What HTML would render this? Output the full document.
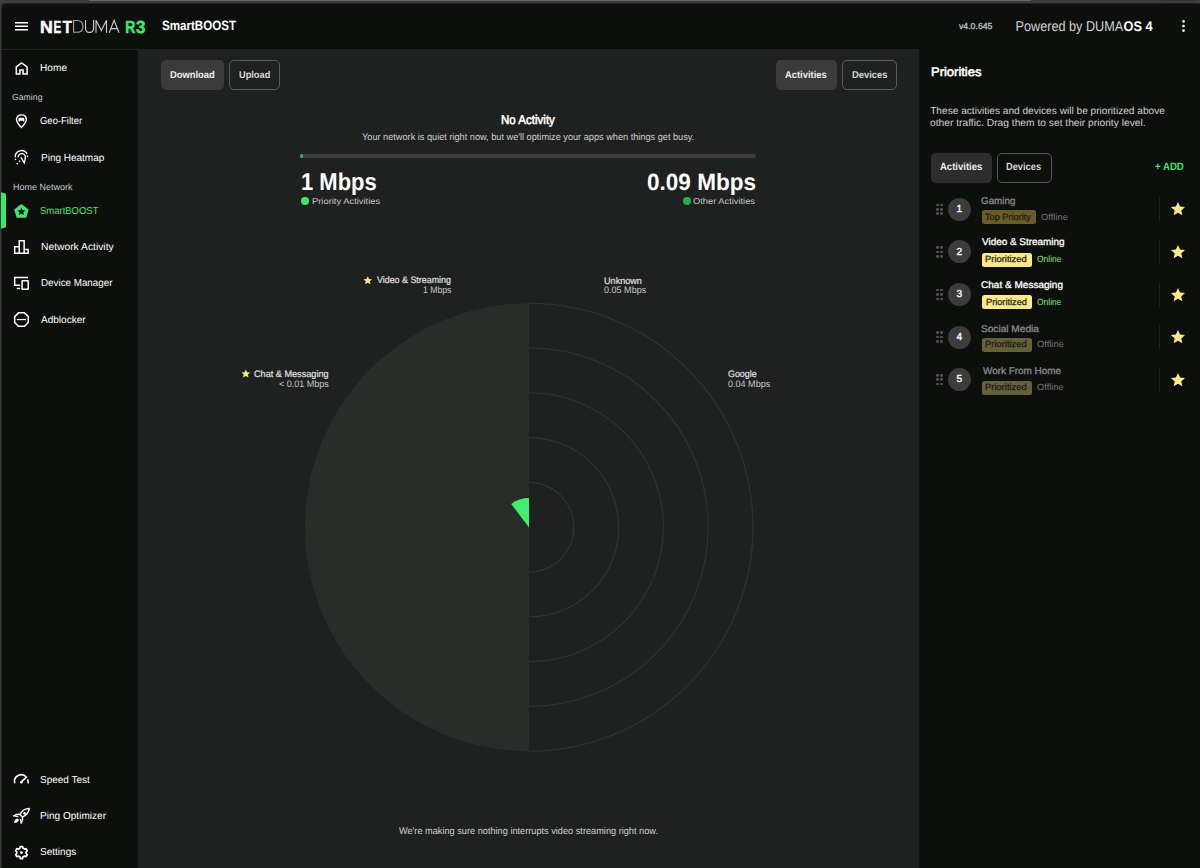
<!DOCTYPE html>
<html><head><meta charset="utf-8">
<style>
*{box-sizing:border-box;margin:0;padding:0}
html,body{width:1200px;height:868px;overflow:hidden;background:#3c3c3c}
body{position:relative;font-family:"Liberation Sans",sans-serif;text-rendering:geometricPrecision}
.t{position:absolute;white-space:nowrap;transform-origin:0 50%}
#topline{position:absolute;left:89px;top:0;width:942px;height:1px;background:#666}
#app{position:absolute;left:1px;top:3px;width:1199px;height:866.5px;background:#0d0f0d;border-radius:5px 2px 0 5px;box-shadow:inset 1px 1px 0 #222}
#hdrline{position:absolute;left:2px;top:49px;width:136px;height:1px;background:#222322}
#main{position:absolute;left:138px;top:49px;width:781px;height:819px;background:#1f2120}
.btn{position:absolute;height:30px;border-radius:5px}
.btn.on{background:#3a3b3a}
.btn.off{border:1px solid #5c5c5c}
.ico{position:absolute}
#bar{position:absolute;left:300px;top:154px;width:456px;height:4px;border-radius:2px;background:#3c3d3c}
#barg{position:absolute;left:300px;top:154px;width:3px;height:4px;border-radius:2px;background:#2fb84f}
.gdot{position:absolute;width:7.5px;height:7.5px;border-radius:50%}
#chart{position:absolute;left:0;top:0}
#rp{position:absolute;left:919px;top:49px;width:281px;height:819px;background:#0d0f0d}
.tab{position:absolute;top:153px;height:30px;border-radius:5px}
.dot{position:absolute;width:2.8px;height:2.8px;border-radius:50%;background:#555}
.num{position:absolute;width:23px;height:23px;border-radius:50%;background:#3b3c3b}
.badge{position:absolute;height:14px;border-radius:2.5px}
.sep{position:absolute;left:1159px;width:1px;height:24px;background:#222322}
.star{position:absolute}
</style></head><body>
<div id="topline"></div><div style="position:absolute;left:1161px;top:0;width:34px;height:1px;background:#303030"></div>
<div id="app"></div>
<div id="hdrline"></div>
<div id="main"></div>
<div id="rp"></div>

<!-- header -->
<svg class="ico" style="left:14px;top:20px" width="16" height="13" viewBox="0 0 16 13">
 <rect x="1" y="2" width="13" height="1.5" fill="#fff"/>
 <rect x="1" y="5.5" width="13" height="1.5" fill="#fff"/>
 <rect x="1" y="9" width="13" height="1.5" fill="#fff"/>
</svg>
<svg class="ico" style="left:36px;top:14px" width="120" height="24" viewBox="0 0 120 24">
 <g font-family="Liberation Sans" font-weight="700" font-size="17.6" fill="#fff" stroke="#fff" stroke-width="0.5">
  <text x="4.0" y="18.7" textLength="12.85" lengthAdjust="spacingAndGlyphs">N</text>
  <text x="17.44" y="18.7" textLength="7.74" lengthAdjust="spacingAndGlyphs">E</text>
  <text x="26.85" y="18.7" textLength="9.07" lengthAdjust="spacingAndGlyphs">T</text>
 </g>
 <g fill="none" stroke="#d0d0d0" stroke-width="1.1">
  <path d="M37.6 6.55 V18.2 H41 C45 18.2 46.9 15.6 46.9 12.4 C46.9 9.1 45 6.55 41 6.55 Z" stroke="#a8a8a8"/>
  <path d="M49.5 6 V14.2 C49.5 17 51.2 18.4 53.6 18.4 C56 18.4 57.6 17 57.6 14.2 V6"/>
  <path d="M60 18.75 V6.3 L65.3 16.5 L70.5 6.3 V18.75"/>
  <path d="M73.2 18.75 L78.1 6.2 L83 18.75 M74.9 14.6 H81.3"/>
 </g>
 <g font-family="Liberation Sans" font-weight="700" font-size="17.6" fill="#3ee66c" stroke="#3ee66c" stroke-width="0.5">
  <text x="89.28" y="18.7" textLength="10.03" lengthAdjust="spacingAndGlyphs">R</text>
  <text x="99.9" y="18.7" textLength="9.45" lengthAdjust="spacingAndGlyphs">3</text>
 </g>
</svg>
<svg class="ico" style="left:1010px;top:14px" width="150" height="24" viewBox="0 0 150 24">
 <text x="5.6" y="16.8" font-family="Liberation Sans" font-weight="400" font-size="14.2" fill="#d2d2d2" textLength="107.6" lengthAdjust="spacingAndGlyphs">Powered by DUMA</text>
 <text x="113.6" y="16.8" font-family="Liberation Sans" font-weight="700" font-size="14" fill="#fff" textLength="29" lengthAdjust="spacingAndGlyphs">OS 4</text>
</svg>
<svg class="ico" style="left:1180px;top:19px" width="8" height="15" viewBox="0 0 8 15">
 <circle cx="3.5" cy="2.4" r="1.3" fill="#fff"/><circle cx="3.5" cy="7" r="1.3" fill="#fff"/><circle cx="3.5" cy="11.6" r="1.3" fill="#fff"/>
</svg>

<!-- sidebar icons (22x22 boxes) -->
<svg class="ico" style="left:10px;top:58px" width="22" height="22" viewBox="0 0 22 22" fill="none" stroke="#fff" stroke-width="1.5" stroke-linejoin="miter">
 <path d="M6.3 16 V8.8 L11.5 4.9 L17.1 8.8 V16 H13.1 V11.9 H9.9 V16 Z"/>
</svg>
<svg class="ico" style="left:10px;top:110px" width="22" height="22" viewBox="0 0 22 22">
 <path d="M11.4 17.6 C8.6 14.8 6.5 12.4 6.5 9.6 C6.5 6.6 8.7 4.9 11.4 4.9 C14.1 4.9 16.3 6.6 16.3 9.6 C16.3 12.4 14.2 14.8 11.4 17.6 Z" fill="none" stroke="#fff" stroke-width="1.4"/>
 <path d="M9.4 7.8 H13.4 C14 7.8 14.3 8.2 14.3 8.8 V11.5 H13.1 L12.7 10.7 H10.1 L9.7 11.5 H8.5 V8.8 C8.5 8.2 8.8 7.8 9.4 7.8 Z" fill="#fff"/>
</svg>
<svg class="ico" style="left:10px;top:146px" width="22" height="22" viewBox="0 0 22 22" fill="none" stroke="#fff" stroke-width="1.35">
 <path d="M5.2 11.2 A6.3 6.3 0 0 1 17.1 8"/>
 <path d="M8.2 11.2 A3.55 3.55 0 0 1 15.3 11.2 C15.3 13 14.8 15 14.2 16.9 L10.9 11.3"/>
 <rect x="4.8" y="12.7" width="1.4" height="1.4" fill="#fff" stroke="none"/>
 <rect x="8.9" y="14.5" width="1.4" height="1.4" fill="#fff" stroke="none"/>
 <rect x="6.5" y="16.9" width="1.4" height="1.4" fill="#fff" stroke="none"/>
 <rect x="16.8" y="9.6" width="1.4" height="1.4" fill="#fff" stroke="none"/>
</svg>
<svg class="ico" style="left:1px;top:192px" width="6" height="37" viewBox="0 0 6 37"><path d="M0 0.3 L5 1.8 V35.2 L0 36.7 Z" fill="#3ee66c"/></svg>
<svg class="ico" style="left:10px;top:200px" width="22" height="22" viewBox="0 0 22 22">
 <path fill-rule="evenodd" fill="#3ee66c" d="M11.4 4 L18.6 9.4 L16.2 17.8 H6.6 L4.2 9.4 Z M11.4 7.6 L12.6 10.2 L15.5 10.4 L13.3 12.3 L14 15 L11.4 13.6 L8.8 15 L9.5 12.3 L7.3 10.4 L10.2 10.2 Z"/>
</svg>
<svg class="ico" style="left:10px;top:236px" width="22" height="22" viewBox="0 0 22 22" fill="none" stroke="#fff" stroke-width="1.5">
 <path d="M4.7 17.35 V10.75 H9.25 V4.7 H14.15 V13.55 H18.1 V17.35 Z M9.25 10.75 V17.35 M14.15 13.55 V17.35"/>
</svg>
<svg class="ico" style="left:10px;top:272px" width="22" height="22" viewBox="0 0 22 22" fill="none" stroke="#fff" stroke-width="1.5">
 <path d="M18 5.6 H4.7 V13.25 H10.1"/>
 <path d="M6.8 16.5 H10.1"/>
 <rect x="12.05" y="8.75" width="6.2" height="8.5" rx="0.6"/>
</svg>
<svg class="ico" style="left:10px;top:308px" width="22" height="22" viewBox="0 0 22 22" fill="none" stroke="#fff" stroke-width="1.5">
 <path d="M8.5 4.85 H14.5 L18.25 8.6 V14.55 L14.5 18.3 H8.5 L4.7 14.55 V8.6 Z"/>
 <path d="M6.8 11.55 H16" stroke-width="1.2"/>
</svg>
<svg class="ico" style="left:10px;top:768px" width="22" height="22" viewBox="0 0 22 22" fill="none" stroke="#fff" stroke-width="1.6">
 <path d="M4.8 15.3 A6.7 6.7 0 0 1 16.4 9.2 L11.6 13.6"/>
 <path d="M17.5 11.4 A6.7 6.7 0 0 1 18.2 15.3"/>
 <circle cx="11.3" cy="14.2" r="1.3" fill="#fff" stroke="none"/>
</svg>
<svg class="ico" style="left:10px;top:804px" width="22" height="22" viewBox="0 0 22 22" fill="none" stroke="#fff" stroke-width="1.4" stroke-linejoin="round">
 <path d="M19.3 4.4 C15.2 4.6 11.8 6.8 9.9 10.6 L12.4 13.1 C16.2 11.2 18.9 8.2 19.3 4.4 Z"/>
 <path d="M9.9 10.6 C8.2 10 6 10.4 3.8 11.8 C5.4 12 6.8 12.3 8.3 12.6 M12.4 13.1 C13 14.8 12.6 17 11.2 19.2 C11 17.6 10.7 16.2 10.4 14.8"/>
 <circle cx="14.5" cy="9.2" r="1.2" fill="#fff" stroke="none"/>
 <path d="M4 18.9 C4.2 16.5 5.4 14.9 7.7 14.6 L8.9 15.8 C8.6 18 6.6 19 4 18.9 Z" fill="#fff" stroke="none"/>
</svg>
<svg class="ico" style="left:10px;top:840.5px" width="22" height="22" viewBox="0 0 22 22">
 <path fill="none" stroke="#fff" stroke-width="1.7" stroke-linejoin="round" d="M10.3 5.6 H12.6 L13 7.3 L14.5 8.1 L16.1 7.6 L17.3 9.6 L16.1 10.8 V12.4 L17.3 13.6 L16.1 15.6 L14.5 15.1 L13 15.9 L12.6 17.6 H10.3 L9.9 15.9 L8.4 15.1 L6.8 15.6 L5.6 13.6 L6.8 12.4 V10.8 L5.6 9.6 L6.8 7.6 L8.4 8.1 L9.9 7.3 Z"/>
 <circle cx="11.45" cy="11.6" r="1.4" fill="#fff"/>
</svg>

<!-- main -->
<div class="btn on" style="left:161px;top:60px;width:63px"></div>
<div class="btn off" style="left:229px;top:60px;width:51px"></div>
<div class="btn on" style="left:776px;top:60px;width:61px"></div>
<div class="btn off" style="left:842px;top:60px;width:55px"></div>
<div id="bar"></div><div id="barg"></div>
<div class="gdot" style="left:301.25px;top:197.3px;background:#3ee66c"></div>
<div class="gdot" style="left:683px;top:197.3px;background:#2ea84c"></div>

<svg id="chart" width="1200" height="868" style="position:absolute;left:0;top:0">
 <path d="M529 303.20 A224.00 224.00 0 0 0 529 751.20 Z" fill="#2a2c2a"/>
 <g fill="none" stroke="#323432" stroke-width="1.1">
  <path d="M529 482.40 A44.80 44.80 0 0 1 529 572.00"/>
  <path d="M529 437.60 A89.60 89.60 0 0 1 529 616.80"/>
  <path d="M529 392.80 A134.40 134.40 0 0 1 529 661.60"/>
  <path d="M529 348.00 A179.20 179.20 0 0 1 529 706.40"/>
  <path d="M529 303.20 A224.00 224.00 0 0 1 529 751.20"/>
 </g>
 <path d="M529 527.6 L529 498 A29.6 29.6 0 0 0 511.2 503.9 Z" fill="#41ee6e"/>
 <path d="M367.8 276.3 l1.3 2.7 3 .3-2.2 2 .6 2.9-2.7-1.5-2.7 1.5.6-2.9-2.2-2 3-.3z" fill="#f3e58a"/>
 <path d="M245.8 369.5 l1.3 2.7 3 .3-2.2 2 .6 2.9-2.7-1.5-2.7 1.5.6-2.9-2.2-2 3-.3z" fill="#f3e58a"/>
</svg>

<!-- right panel -->
<div class="tab" style="left:931px;width:61px;background:#2c2d2c"></div>
<div class="tab" style="left:997px;width:55px;border:1px solid #585858"></div>
<div class="dot" style="left:935.8px;top:203.5px"></div>
<div class="dot" style="left:940.4px;top:203.5px"></div>
<div class="dot" style="left:935.8px;top:207.9px"></div>
<div class="dot" style="left:940.4px;top:207.9px"></div>
<div class="dot" style="left:935.8px;top:212.3px"></div>
<div class="dot" style="left:940.4px;top:212.3px"></div>
<div class="num" style="left:947.8px;top:197.8px"></div>
<div class="badge" style="left:982px;top:210.2px;width:54px;background:#6b5b2b"></div>
<div class="sep" style="top:197.3px"></div>
<svg class="star" style="left:1170px;top:201.3px" width="16" height="16" viewBox="0 0 24 24"><path d="M12 1.5l3.1 6.9 7.4.7-5.6 5 1.7 7.4L12 17.6l-6.6 3.9 1.7-7.4-5.6-5 7.4-.7z" fill="#fbe98c"/></svg>
<div class="dot" style="left:935.8px;top:246.1px"></div>
<div class="dot" style="left:940.4px;top:246.1px"></div>
<div class="dot" style="left:935.8px;top:250.5px"></div>
<div class="dot" style="left:940.4px;top:250.5px"></div>
<div class="dot" style="left:935.8px;top:254.9px"></div>
<div class="dot" style="left:940.4px;top:254.9px"></div>
<div class="num" style="left:947.8px;top:240.4px"></div>
<div class="badge" style="left:982px;top:252.8px;width:50px;background:#fbe98c"></div>
<div class="sep" style="top:239.9px"></div>
<svg class="star" style="left:1170px;top:243.9px" width="16" height="16" viewBox="0 0 24 24"><path d="M12 1.5l3.1 6.9 7.4.7-5.6 5 1.7 7.4L12 17.6l-6.6 3.9 1.7-7.4-5.6-5 7.4-.7z" fill="#fbe98c"/></svg>
<div class="dot" style="left:935.8px;top:288.7px"></div>
<div class="dot" style="left:940.4px;top:288.7px"></div>
<div class="dot" style="left:935.8px;top:293.1px"></div>
<div class="dot" style="left:940.4px;top:293.1px"></div>
<div class="dot" style="left:935.8px;top:297.5px"></div>
<div class="dot" style="left:940.4px;top:297.5px"></div>
<div class="num" style="left:947.8px;top:283.0px"></div>
<div class="badge" style="left:982px;top:295.4px;width:50px;background:#fbe98c"></div>
<div class="sep" style="top:282.5px"></div>
<svg class="star" style="left:1170px;top:286.5px" width="16" height="16" viewBox="0 0 24 24"><path d="M12 1.5l3.1 6.9 7.4.7-5.6 5 1.7 7.4L12 17.6l-6.6 3.9 1.7-7.4-5.6-5 7.4-.7z" fill="#fbe98c"/></svg>
<div class="dot" style="left:935.8px;top:331.2px"></div>
<div class="dot" style="left:940.4px;top:331.2px"></div>
<div class="dot" style="left:935.8px;top:335.6px"></div>
<div class="dot" style="left:940.4px;top:335.6px"></div>
<div class="dot" style="left:935.8px;top:340.0px"></div>
<div class="dot" style="left:940.4px;top:340.0px"></div>
<div class="num" style="left:947.8px;top:325.5px"></div>
<div class="badge" style="left:982px;top:337.9px;width:50px;background:#65603c"></div>
<div class="sep" style="top:325.0px"></div>
<svg class="star" style="left:1170px;top:329.0px" width="16" height="16" viewBox="0 0 24 24"><path d="M12 1.5l3.1 6.9 7.4.7-5.6 5 1.7 7.4L12 17.6l-6.6 3.9 1.7-7.4-5.6-5 7.4-.7z" fill="#fbe98c"/></svg>
<div class="dot" style="left:935.8px;top:373.8px"></div>
<div class="dot" style="left:940.4px;top:373.8px"></div>
<div class="dot" style="left:935.8px;top:378.2px"></div>
<div class="dot" style="left:940.4px;top:378.2px"></div>
<div class="dot" style="left:935.8px;top:382.6px"></div>
<div class="dot" style="left:940.4px;top:382.6px"></div>
<div class="num" style="left:947.8px;top:368.1px"></div>
<div class="badge" style="left:982px;top:380.5px;width:50px;background:#65603c"></div>
<div class="sep" style="top:367.6px"></div>
<svg class="star" style="left:1170px;top:371.6px" width="16" height="16" viewBox="0 0 24 24"><path d="M12 1.5l3.1 6.9 7.4.7-5.6 5 1.7 7.4L12 17.6l-6.6 3.9 1.7-7.4-5.6-5 7.4-.7z" fill="#fbe98c"/></svg>

<div class="t" id="hdr_sb" style="left:161.93px;top:19.44px;font-size:13.48px;line-height:13.48px;font-weight:700;color:#ffffff;transform:scaleX(0.8611);">SmartBOOST</div>
<div class="t" id="hdr_ver" style="left:958.97px;top:21.61px;font-size:8.70px;line-height:8.70px;font-weight:400;-webkit-text-stroke:0.3px #b8c0c8;color:#b8c0c8;transform:scaleX(1.0025);">v4.0.645</div>
<div class="t" id="sb_home" style="left:40.00px;top:64.38px;font-size:10.14px;line-height:10.14px;font-weight:400;color:#ffffff;transform:scaleX(1.0000);">Home</div>
<div class="t" id="sb_gaming" style="left:12.00px;top:93.11px;font-size:8.70px;line-height:8.70px;font-weight:400;color:#c8c8c8;transform:scaleX(1.0021);">Gaming</div>
<div class="t" id="sb_geo" style="left:40.00px;top:117.38px;font-size:10.14px;line-height:10.14px;font-weight:400;color:#ffffff;transform:scaleX(0.9348);">Geo-Filter</div>
<div class="t" id="sb_ping" style="left:41.20px;top:153.78px;font-size:10.14px;line-height:10.14px;font-weight:400;color:#ffffff;transform:scaleX(0.9865);">Ping Heatmap</div>
<div class="t" id="sb_homenet" style="left:12.98px;top:183.16px;font-size:8.99px;line-height:8.99px;font-weight:400;color:#c8c8c8;transform:scaleX(1.0003);">Home Network</div>
<div class="t" id="sb_smart" style="left:40.00px;top:207.28px;font-size:10.14px;line-height:10.14px;font-weight:400;color:#3ee66c;transform:scaleX(0.9365);">SmartBOOST</div>
<div class="t" id="sb_netact" style="left:40.99px;top:243.18px;font-size:10.14px;line-height:10.14px;font-weight:400;color:#ffffff;transform:scaleX(1.0169);">Network Activity</div>
<div class="t" id="sb_devman" style="left:41.02px;top:279.28px;font-size:10.14px;line-height:10.14px;font-weight:400;color:#ffffff;transform:scaleX(0.9690);">Device Manager</div>
<div class="t" id="sb_adblock" style="left:40.96px;top:315.78px;font-size:10.14px;line-height:10.14px;font-weight:400;color:#ffffff;transform:scaleX(0.9901);">Adblocker</div>
<div class="t" id="sb_speed" style="left:40.40px;top:776.28px;font-size:10.14px;line-height:10.14px;font-weight:400;color:#ffffff;transform:scaleX(0.9865);">Speed Test</div>
<div class="t" id="sb_pingopt" style="left:40.39px;top:812.48px;font-size:10.14px;line-height:10.14px;font-weight:400;color:#ffffff;transform:scaleX(0.9942);">Ping Optimizer</div>
<div class="t" id="sb_settings" style="left:40.39px;top:848.28px;font-size:10.14px;line-height:10.14px;font-weight:400;color:#ffffff;transform:scaleX(0.9922);">Settings</div>
<div class="t" id="btn_dl" style="left:169.99px;top:71.30px;font-size:10.00px;line-height:10.00px;font-weight:700;color:#f0f0f0;transform:scaleX(0.9369);">Download</div>
<div class="t" id="btn_ul" style="left:238.98px;top:71.30px;font-size:10.00px;line-height:10.00px;font-weight:700;color:#d8d8d8;transform:scaleX(0.9226);">Upload</div>
<div class="t" id="btn_act" style="left:784.88px;top:71.30px;font-size:10.00px;line-height:10.00px;font-weight:700;color:#f0f0f0;transform:scaleX(0.9381);">Activities</div>
<div class="t" id="btn_dev" style="left:852.16px;top:71.30px;font-size:10.00px;line-height:10.00px;font-weight:700;color:#d8d8d8;transform:scaleX(0.9390);">Devices</div>
<div class="t" id="noact" style="left:501.13px;top:113.98px;font-size:12.61px;line-height:12.61px;font-weight:400;-webkit-text-stroke:0.55px #ffffff;color:#ffffff;transform:scaleX(0.9152);">No Activity</div>
<div class="t" id="noact_sub" style="left:362.19px;top:132.95px;font-size:9.71px;line-height:9.71px;font-weight:400;color:#d0d0d0;transform:scaleX(0.9456);">Your network is quiet right now, but we'll optimize your apps when things get busy.</div>
<div class="t" id="spd1" style="left:301.03px;top:170.93px;font-size:24.20px;line-height:24.20px;font-weight:700;color:#ffffff;transform:scaleX(0.9088);">1 Mbps</div>
<div class="t" id="spd1_lbl" style="left:311.95px;top:197.48px;font-size:8.55px;line-height:8.55px;font-weight:400;color:#c8c8c8;transform:scaleX(1.0955);">Priority Activities</div>
<div class="t" id="spd2" style="left:647.01px;top:171.04px;font-size:23.48px;line-height:23.48px;font-weight:700;color:#ffffff;transform:scaleX(0.9603);">0.09 Mbps</div>
<div class="t" id="spd2_lbl" style="left:693.00px;top:197.48px;font-size:8.55px;line-height:8.55px;font-weight:400;color:#c8c8c8;transform:scaleX(1.0877);">Other Activities</div>
<div class="t" id="lbl_vs" style="left:377.37px;top:274.89px;font-size:9.42px;line-height:9.42px;font-weight:400;-webkit-text-stroke:0.2px #e0e0e0;color:#e0e0e0;transform:scaleX(0.9445);">Video &amp; Streaming</div>
<div class="t" id="lbl_vs2" style="left:423.19px;top:285.19px;font-size:9.42px;line-height:9.42px;font-weight:400;color:#c8c8c8;transform:scaleX(0.9211);">1 Mbps</div>
<div class="t" id="lbl_unk" style="left:604.40px;top:275.59px;font-size:9.42px;line-height:9.42px;font-weight:400;-webkit-text-stroke:0.2px #e0e0e0;color:#e0e0e0;transform:scaleX(0.9670);">Unknown</div>
<div class="t" id="lbl_unk2" style="left:604.38px;top:285.39px;font-size:9.42px;line-height:9.42px;font-weight:400;color:#c8c8c8;transform:scaleX(0.9609);">0.05 Mbps</div>
<div class="t" id="lbl_chat" style="left:254.20px;top:368.59px;font-size:9.42px;line-height:9.42px;font-weight:400;-webkit-text-stroke:0.2px #e0e0e0;color:#e0e0e0;transform:scaleX(0.9702);">Chat &amp; Messaging</div>
<div class="t" id="lbl_chat2" style="left:279.39px;top:378.59px;font-size:9.42px;line-height:9.42px;font-weight:400;color:#c8c8c8;transform:scaleX(0.9587);">&lt; 0.01 Mbps</div>
<div class="t" id="lbl_goog" style="left:727.52px;top:368.99px;font-size:9.42px;line-height:9.42px;font-weight:400;-webkit-text-stroke:0.2px #e0e0e0;color:#e0e0e0;transform:scaleX(0.9437);">Google</div>
<div class="t" id="lbl_goog2" style="left:727.50px;top:378.74px;font-size:9.42px;line-height:9.42px;font-weight:400;color:#c8c8c8;transform:scaleX(0.9608);">0.04 Mbps</div>
<div class="t" id="bottom" style="left:398.60px;top:826.65px;font-size:9.71px;line-height:9.71px;font-weight:400;color:#d0d0d0;transform:scaleX(0.9469);">We're making sure nothing interrupts video streaming right now.</div>
<div class="t" id="pri" style="left:930.73px;top:66.08px;font-size:12.32px;line-height:12.32px;font-weight:400;-webkit-text-stroke:0.55px #ffffff;color:#ffffff;transform:scaleX(1.0535);">Priorities</div>
<div class="t" id="desc1" style="left:930.19px;top:106.98px;font-size:10.14px;line-height:10.14px;font-weight:400;color:#d0d0d0;transform:scaleX(1.0000);">These activities and devices will be prioritized above</div>
<div class="t" id="desc2" style="left:930.20px;top:119.18px;font-size:10.14px;line-height:10.14px;font-weight:400;color:#d0d0d0;transform:scaleX(1.0118);">other traffic. Drag them to set their priority level.</div>
<div class="t" id="tab_act" style="left:939.84px;top:162.83px;font-size:10.43px;line-height:10.43px;font-weight:700;color:#f0f0f0;transform:scaleX(0.9129);">Activities</div>
<div class="t" id="tab_dev" style="left:1005.85px;top:162.83px;font-size:10.43px;line-height:10.43px;font-weight:700;color:#d8d8d8;transform:scaleX(0.8910);">Devices</div>
<div class="t" id="add" style="left:1155.01px;top:161.88px;font-size:10.72px;line-height:10.72px;font-weight:700;color:#3de36a;transform:scaleX(0.8974);">+ ADD</div>
<div class="t" id="r1_num" style="left:939.30px;width:40px;text-align:center;top:204.98px;font-size:10.14px;line-height:10.14px;font-weight:400;-webkit-text-stroke:0.35px #ffffff;color:#ffffff">1</div>
<div class="t" id="r1_title" style="left:981.00px;top:196.88px;font-size:9.78px;line-height:9.78px;font-weight:400;-webkit-text-stroke:0.3px #8a8a8a;color:#8a8a8a;transform:scaleX(1.0071);">Gaming</div>
<div class="t" id="r1_badge" style="left:984.78px;top:213.00px;font-size:9.06px;line-height:9.06px;font-weight:400;-webkit-text-stroke:0.3px #221f12;color:#221f12;transform:scaleX(1.0120);">Top Priority</div>
<div class="t" id="r1_status" style="left:1040.56px;top:213.00px;font-size:9.06px;line-height:9.06px;font-weight:400;color:#767676;transform:scaleX(1.0345);">Offline</div>
<div class="t" id="r2_num" style="left:939.30px;width:40px;text-align:center;top:247.56px;font-size:10.14px;line-height:10.14px;font-weight:400;-webkit-text-stroke:0.35px #ffffff;color:#ffffff">2</div>
<div class="t" id="r2_title" style="left:982.00px;top:237.96px;font-size:9.78px;line-height:9.78px;font-weight:400;-webkit-text-stroke:0.3px #ffffff;color:#ffffff;transform:scaleX(1.0163);">Video &amp; Streaming</div>
<div class="t" id="r2_badge" style="left:984.77px;top:255.08px;font-size:9.06px;line-height:9.06px;font-weight:400;-webkit-text-stroke:0.3px #2a2a20;color:#2a2a20;transform:scaleX(1.0371);">Prioritized</div>
<div class="t" id="r2_status" style="left:1036.57px;top:255.08px;font-size:9.06px;line-height:9.06px;font-weight:400;color:#80e27c;transform:scaleX(0.9348);">Online</div>
<div class="t" id="r3_num" style="left:939.30px;width:40px;text-align:center;top:290.14px;font-size:10.14px;line-height:10.14px;font-weight:400;-webkit-text-stroke:0.35px #ffffff;color:#ffffff">3</div>
<div class="t" id="r3_title" style="left:981.00px;top:280.54px;font-size:9.78px;line-height:9.78px;font-weight:400;-webkit-text-stroke:0.3px #ffffff;color:#ffffff;transform:scaleX(1.0277);">Chat &amp; Messaging</div>
<div class="t" id="r3_badge" style="left:985.59px;top:298.16px;font-size:9.06px;line-height:9.06px;font-weight:400;-webkit-text-stroke:0.3px #2a2a20;color:#2a2a20;transform:scaleX(1.0176);">Prioritized</div>
<div class="t" id="r3_status" style="left:1036.57px;top:298.16px;font-size:9.06px;line-height:9.06px;font-weight:400;color:#80e27c;transform:scaleX(0.9348);">Online</div>
<div class="t" id="r4_num" style="left:939.30px;width:40px;text-align:center;top:332.72px;font-size:10.14px;line-height:10.14px;font-weight:400;-webkit-text-stroke:0.35px #ffffff;color:#ffffff">4</div>
<div class="t" id="r4_title" style="left:981.00px;top:324.52px;font-size:9.78px;line-height:9.78px;font-weight:400;-webkit-text-stroke:0.3px #8a8a8a;color:#8a8a8a;transform:scaleX(1.0357);">Social Media</div>
<div class="t" id="r4_badge" style="left:984.79px;top:340.24px;font-size:9.06px;line-height:9.06px;font-weight:400;-webkit-text-stroke:0.3px #1e1d14;color:#1e1d14;transform:scaleX(1.0371);">Prioritized</div>
<div class="t" id="r4_status" style="left:1036.56px;top:340.24px;font-size:9.06px;line-height:9.06px;font-weight:400;color:#767676;transform:scaleX(1.0306);">Offline</div>
<div class="t" id="r5_num" style="left:939.30px;width:40px;text-align:center;top:375.30px;font-size:10.14px;line-height:10.14px;font-weight:400;-webkit-text-stroke:0.35px #ffffff;color:#ffffff">5</div>
<div class="t" id="r5_title" style="left:982.95px;top:366.70px;font-size:9.78px;line-height:9.78px;font-weight:400;-webkit-text-stroke:0.3px #8a8a8a;color:#8a8a8a;transform:scaleX(1.0136);">Work From Home</div>
<div class="t" id="r5_badge" style="left:984.79px;top:383.32px;font-size:9.06px;line-height:9.06px;font-weight:400;-webkit-text-stroke:0.3px #1e1d14;color:#1e1d14;transform:scaleX(1.0371);">Prioritized</div>
<div class="t" id="r5_status" style="left:1036.56px;top:383.32px;font-size:9.06px;line-height:9.06px;font-weight:400;color:#767676;transform:scaleX(1.0306);">Offline</div>
</body></html>
